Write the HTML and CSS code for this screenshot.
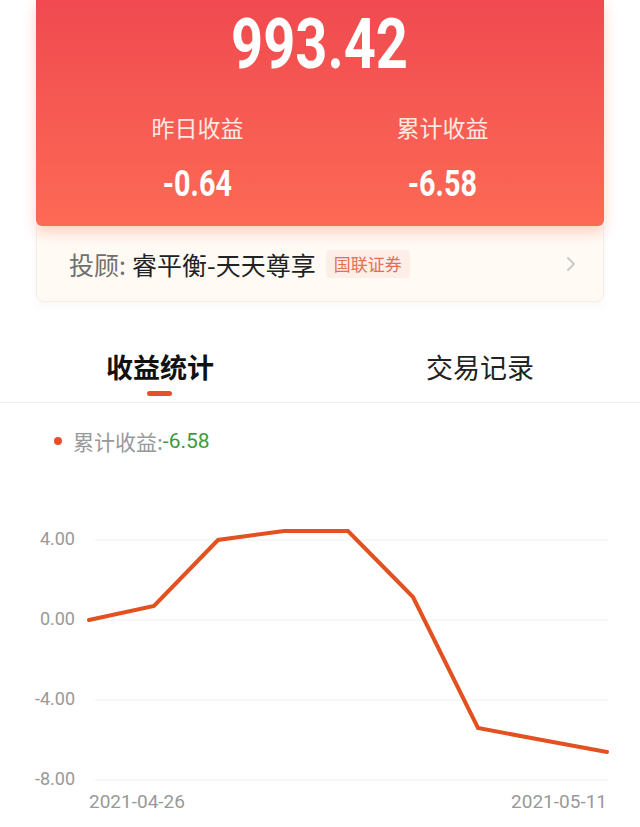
FILE: index.html
```html
<!DOCTYPE html>
<html lang="zh-CN">
<head>
    <meta charset="UTF-8">
    <meta name="viewport" content="width=device-width, initial-scale=1.0">
    <title>收益统计</title>
    <link rel="stylesheet" href="styles.css">
</head>
<body>
    <main>
        <section class="summary">
            <div class="total"><span class="narrow">993.42</span></div>
            <div class="stats">
                <div class="stat">
                    <div class="stat-label">昨日收益</div>
                    <div class="stat-value"><span class="narrow">-0.64</span></div>
                </div>
                <div class="stat">
                    <div class="stat-label">累计收益</div>
                    <div class="stat-value"><span class="narrow">-6.58</span></div>
                </div>
            </div>
        </section>

        <div class="advisor">
            <span class="advisor-key">投顾:</span>
            <span class="advisor-name">睿平衡-天天尊享</span>
            <span class="tag">国联证券</span>
            <svg class="chevron" width="12" height="18" viewBox="0 0 12 18">
                <path d="M3 3 L9 9 L3 15" fill="none" stroke="#c9c9c9" stroke-width="2" stroke-linecap="round" stroke-linejoin="round"/>
            </svg>
        </div>

        <nav class="tabs">
            <div class="tab active">收益统计</div>
            <div class="tab">交易记录</div>
        </nav>

        <section class="chart">
            <div class="legend">
                <span class="dot"></span>
                <span class="legend-key">累计收益:</span><span class="legend-value">-6.58</span>
            </div>
            <svg class="plot" width="640" height="347" viewBox="0 0 640 347">
                <g class="grid">
                    <line x1="95" y1="59" x2="608" y2="59"/>
                    <line x1="95" y1="139" x2="608" y2="139"/>
                    <line x1="95" y1="219" x2="608" y2="219"/>
                    <line x1="95" y1="299" x2="608" y2="299"/>
                </g>
                <g class="axis-y">
                    <text x="75" y="59">4.00</text>
                    <text x="75" y="139">0.00</text>
                    <text x="75" y="219">-4.00</text>
                    <text x="75" y="299">-8.00</text>
                </g>
                <text class="axis-x" x="89" y="322">2021-04-26</text>
                <text class="axis-x end" x="607" y="322">2021-05-11</text>
                <polyline class="line" points="89,139 154,125 218,59 284,50 348,50 413,116 478,247 542,259 607,271"/>
            </svg>
        </section>
    </main>
</body>
</html>
```

FILE: styles.css
```css
body {
    margin: 0;
    background-color: #fff;
    font-family: "Noto Sans CJK SC", "Noto Sans", sans-serif;
}
main {
    width: 640px;
    overflow: hidden;
}
.summary {
    margin: 0 36px;
    height: 226px;
    background: linear-gradient(#f04a50, #fd6a55);
    border-radius: 0 0 6px 6px;
    box-shadow: 0 6px 14px rgba(253, 106, 81, 0.3);
    color: #fff;
    position: relative;
    z-index: 1;
}
.narrow {
    display: inline-block;
    transform: scaleX(0.8);
}
.total {
    padding-top: 8px;
    height: 72px;
    text-align: center;
    font-family: "Roboto", sans-serif;
    font-weight: bold;
    font-size: 70px;
    line-height: 72px;
}
.stats {
    display: grid;
    grid-template-columns: 245px 245px;
    justify-content: center;
    padding-top: 32px;
}
.stat {
    text-align: center;
}
.stat-label {
    font-size: 23px;
    line-height: 30px;
    color: #ffe9e4;
}
.stat-value {
    margin-top: 22px;
    font-family: "Roboto", sans-serif;
    font-weight: bold;
    font-size: 36px;
    line-height: 40px;
}
.advisor {
    margin: 0 36px;
    height: 76px;
    box-sizing: border-box;
    display: flex;
    align-items: center;
    padding: 0 26px 0 32px;
    background-color: #fffaf4;
    border: 1px solid #f7eee3;
    border-top: none;
    border-radius: 0 0 8px 8px;
    font-size: 25px;
    box-shadow: 0 4px 10px rgba(0, 0, 0, 0.03);
}
.advisor-key {
    color: #707070;
    margin-right: 6px;
}
.advisor-name {
    color: #222;
}
.tag {
    margin-left: 10px;
    padding: 2px 8px;
    font-size: 17px;
    line-height: 24px;
    color: #e2714c;
    background-color: #fdeee8;
    border-radius: 3px;
}
.chevron {
    margin-left: auto;
}
.tabs {
    display: grid;
    grid-template-columns: 1fr 1fr;
    height: 101px;
    box-sizing: border-box;
    padding-top: 45px;
    border-bottom: 1px solid #f0f0f0;
}
.tab {
    text-align: center;
    font-size: 27px;
    line-height: 40px;
    color: #222;
    position: relative;
}
.tab.active {
    font-weight: bold;
    color: #111;
}
.tab.active::after {
    content: "";
    position: absolute;
    left: 147px;
    top: 44px;
    width: 25px;
    height: 5px;
    border-radius: 3px;
    background-color: #e5502a;
}
.legend {
    height: 78px;
    box-sizing: border-box;
    padding: 0 0 2px 54px;
    display: flex;
    align-items: center;
    font-size: 21px;
    line-height: 30px;
}
.dot {
    width: 8px;
    height: 8px;
    border-radius: 50%;
    background-color: #e5502a;
    margin-right: 11px;
}
.legend-key {
    color: #999;
}
.legend-value {
    color: #3a9b3c;
    font-family: "Roboto", sans-serif;
}
.plot {
    display: block;
}
.grid line {
    stroke: #f1f1f1;
    stroke-width: 1;
}
.axis-y text {
    font-family: "Roboto", sans-serif;
    font-size: 18px;
    fill: #999;
    text-anchor: end;
    dominant-baseline: middle;
}
.axis-x {
    font-family: "Roboto", sans-serif;
    font-size: 19px;
    fill: #999;
    dominant-baseline: middle;
}
.axis-x.end {
    text-anchor: end;
}
.line {
    fill: none;
    stroke: #e2511f;
    stroke-width: 4;
    stroke-linejoin: miter;
    stroke-linecap: round;
}
```
